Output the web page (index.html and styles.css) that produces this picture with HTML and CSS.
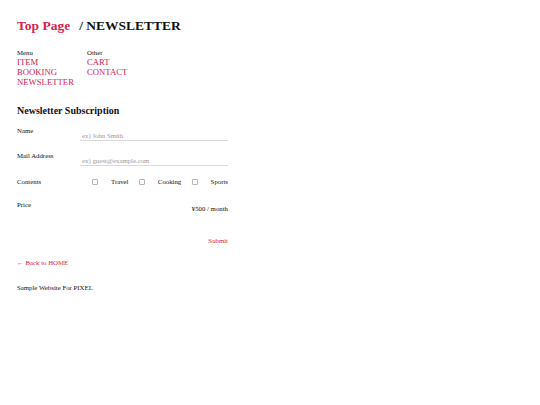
FILE: index.html
```html
<!DOCTYPE html>
<html lang="en">
<head>
<meta charset="utf-8">
<title>Newsletter</title>
<link rel="stylesheet" href="styles.css">
</head>
<body>
<div class="page">
  <header class="header">
    <h1 class="title"><a class="home" href="#">Top Page</a><span class="current">/ NEWSLETTER</span></h1>
    <nav class="nav">
      <div class="nav-col">
        <div class="nav-head">Menu</div>
        <a href="#">ITEM</a>
        <a href="#">BOOKING</a>
        <a href="#">NEWSLETTER</a>
      </div>
      <div class="nav-col">
        <div class="nav-head">Other</div>
        <a href="#">CART</a>
        <a href="#">CONTACT</a>
      </div>
    </nav>
  </header>
  <main class="main">
    <h2 class="section-title">Newsletter Subscription</h2>
    <form class="form">
      <div class="row row-input">
        <label class="label">Name</label>
        <input class="field" type="text" placeholder="ex) John Smith">
      </div>
      <div class="row row-input">
        <label class="label">Mail Address</label>
        <input class="field" type="text" placeholder="ex) guest@example.com">
      </div>
      <div class="row row-check">
        <span class="label">Contents</span>
        <div class="checks">
          <label class="check"><span class="box"></span>Travel</label>
          <label class="check"><span class="box"></span>Cooking</label>
          <label class="check"><span class="box"></span>Sports</label>
        </div>
      </div>
      <div class="row row-price">
        <span class="label">Price</span>
        <span class="price">¥500 / month</span>
      </div>
      <div class="submit-row">
        <button class="submit" type="button">Submit</button>
      </div>
    </form>
    <a class="back" href="#">← Back to HOME</a>
  </main>
  <footer class="footer">Sample Website For PIXEL</footer>
</div>
</body>
</html>
```
FILE: styles.css
```css
* { box-sizing: border-box; }
html, body { margin: 0; padding: 0; background: #fff; }
body {
  font-family: "Liberation Serif", "Times New Roman", serif;
  color: #111;
}
a { color: #d3244f; text-decoration: none; }
.page { width: 211px; margin-left: 17px; padding-top: 17px; }

.title {
  margin: 0;
  font-size: 13.5px;
  font-weight: bold;
  line-height: 18px;
  display: flex;
  gap: 9px;
}
.title .home { color: #d3244f; }
.title .current { color: #111; }

.nav { display: flex; margin-top: 14px; }
.nav-col { display: flex; flex-direction: column; width: 70px; }
.nav-head { font-size: 6.8px; line-height: 8px; color: #111; }
.nav-col a { font-size: 8.7px; line-height: 10px; }

.main { margin-top: 17px; }
.section-title {
  margin: 0 0 9px;
  font-size: 10px;
  line-height: 14px;
  font-weight: bold;
}

.form { display: flex; flex-direction: column; }
.row { display: flex; align-items: flex-start; font-size: 6.8px; }
.label { width: 63px; flex: none; line-height: 8px; color: #111; }
.row-input { height: 25px; }
.row-input + .row-check { margin-top: 1px; }
.field {
  flex: 1;
  border: none;
  border-bottom: 1px solid #d9d9d9;
  font-family: inherit;
  font-size: 6.8px;
  padding: 0 2px;
  height: 11px;
  margin-top: 3px;
  outline: none;
  background: transparent;
  color: #111;
}
.field::placeholder { color: #9a9a9a; }

.row-check { height: 23px; }
.checks { flex: 1; display: flex; justify-content: space-between; padding-left: 12px; line-height: 8px; }
.check { display: flex; align-items: center; gap: 13px; color: #111; }
.box { width: 6px; height: 6px; border: 1px solid #b5b5b5; border-radius: 1px; }

.row-price { height: 28px; justify-content: space-between; }
.price { margin-top: 4px; line-height: 8px; }

.submit-row { display: flex; justify-content: flex-end; align-items: flex-start; height: 30px; padding-top: 8px; }
.submit {
  border: none; background: none; padding: 0;
  font-family: inherit; font-size: 6.8px; line-height: 8px; color: #d3244f;
}

.back { display: block; font-size: 6.8px; line-height: 8px; }

.footer { margin-top: 17px; font-size: 6.8px; line-height: 8px; color: #111; }
```
